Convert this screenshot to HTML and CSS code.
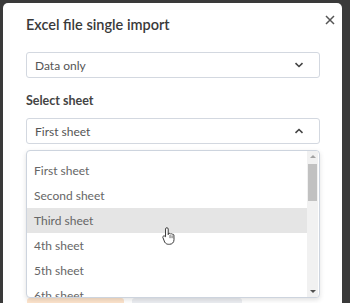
FILE: index.html
```html
<!DOCTYPE html>
<html lang="en">
<head>
  <meta charset="UTF-8" />
  <meta name="viewport" content="width=device-width, initial-scale=1.0"/>
  <title>Excel file single import</title>
  <link rel="stylesheet" href="styles.css">
</head>
<body>
  <div class="modal">
    <!-- Header -->
    <div class="modal-header">
      <h2>Excel file single import</h2>
      <button class="close-btn" aria-label="Close">
        <svg width="10" height="10" viewBox="0 0 10 10"><path d="M1 1L9 9M9 1L1 9" stroke="#555" stroke-width="1.5" fill="none"/></svg>
      </button>
    </div>

    <!-- Import mode -->
    <div class="select">
      <span>Data only</span>
      <svg width="10" height="6" viewBox="0 0 10 6"><path d="M1.5 1.2L5 4.5L8.5 1.2" stroke="#444" stroke-width="1.6" fill="none"/></svg>
    </div>

    <!-- Sheet picker -->
    <div class="label">Select sheet</div>
    <div class="dropdown">
      <div class="select open">
        <span>First sheet</span>
        <svg width="10" height="6" viewBox="0 0 10 6"><path d="M1.5 4.8L5 1.5L8.5 4.8" stroke="#444" stroke-width="1.6" fill="none"/></svg>
      </div>
      <div class="menu">
        <ul class="options">
          <li>First sheet</li>
          <li>Second sheet</li>
          <li class="hover">Third sheet
            <svg class="cursor" width="15" height="19" viewBox="0 0 14 17"><path d="M4.5 1.2c.8 0 1.3.6 1.3 1.3v5.2l.3-1c.6-.4 1.4-.2 1.7.4.5-.4 1.3-.3 1.7.3.5-.3 1.3-.1 1.6.6l.1 4.4c0 2.6-1.8 4.3-4.2 4.3h-1c-1.6 0-2.6-.8-3.5-2L1 10.8c-.5-.7-.3-1.5.4-1.8.6-.3 1.3 0 1.8.6l.1.1V2.5c0-.7.5-1.3 1.2-1.3z" fill="#fff" stroke="#333" stroke-width=".9"/><path d="M7.5 8v3M9.4 8.4v2.6" stroke="#333" stroke-width=".7"/></svg>
          </li>
          <li>4th sheet</li>
          <li>5th sheet</li>
          <li>6th sheet</li>
        </ul>
        <div class="scrollbar">
          <span class="arrow up"></span>
          <div class="track"><div class="thumb"></div></div>
          <span class="arrow down"></span>
        </div>
      </div>
    </div>

    <!-- Footer buttons, mostly hidden behind the open menu -->
    <div class="actions">
      <button class="btn primary" aria-label="Import"></button>
      <button class="btn secondary" aria-label="Cancel"></button>
    </div>
  </div>
</body>
</html>
```

FILE: styles.css
```css
/* Page backdrop */
body {
  margin: 0;
  background: #3a3a3a;
  font-family: Lato, "Open Sans", sans-serif;
  overflow: hidden;
}

/* Modal */
.modal {
  width: 339px;
  height: 300px;
  margin: 3px 0 0 3px;
  padding: 12px 22px 0 23px;
  box-sizing: border-box;
  background: #fff;
  border-radius: 5px 5px 0 0;
  overflow: hidden;
}

.modal-header {
  display: flex;
  justify-content: space-between;
  align-items: flex-start;
}
.modal-header h2 {
  margin: 0;
  font-size: 14.5px;
  line-height: 20px;
  font-weight: 600;
  color: #3a3a3a;
}
.close-btn {
  border: none;
  background: none;
  padding: 0;
  margin: -1px -16px 0 0;
  width: 12px;
  height: 12px;
  display: flex;
  align-items: center;
  justify-content: center;
}

/* Select boxes */
.select {
  display: flex;
  align-items: center;
  justify-content: space-between;
  height: 26px;
  margin-top: 17px;
  padding: 0 15px 0 8px;
  box-sizing: border-box;
  border: 1px solid #d3d8e0;
  border-radius: 3px;
  font-size: 12px;
  color: #555;
}
.select.open {
  margin-top: 0;
}

.label {
  margin: 14px 0 8px;
  font-size: 12.5px;
  line-height: 18px;
  font-weight: 700;
  color: #444;
}

/* Dropdown menu */
.dropdown {
  position: relative;
}
.menu {
  position: absolute;
  left: 0;
  right: 0;
  top: 32px;
  height: 146px;
  display: flex;
  background: #fff;
  border: 1px solid #cdd4de;
  border-radius: 4px;
  box-shadow: 0 2px 5px rgba(0, 0, 0, 0.12);
  overflow: hidden;
  z-index: 2;
}
.options {
  flex: 1;
  list-style: none;
  margin: 0;
  padding: 7px 0 0;
}
.options li {
  position: relative;
  height: 25px;
  line-height: 25px;
  padding-left: 7px;
  font-size: 12px;
  color: #666;
}
.options li.hover {
  background: #e5e5e5;
}
.cursor {
  position: absolute;
  left: 135px;
  top: 18px;
  z-index: 1;
}

/* Scrollbar */
.scrollbar {
  width: 11px;
  margin-right: 1px;
  display: flex;
  flex-direction: column;
  align-items: center;
  background: #f1f1f1;
}
.track {
  flex: 1;
  width: 100%;
  padding: 0 1px;
  box-sizing: border-box;
}
.thumb {
  height: 37px;
  margin-top: 2px;
  background: #c1c1c1;
}
.arrow {
  width: 0;
  height: 0;
  margin: 4px 0;
  border-left: 3px solid transparent;
  border-right: 3px solid transparent;
}
.arrow.up {
  border-bottom: 3px solid #a3a3a3;
}
.arrow.down {
  border-top: 3px solid #505050;
}

/* Footer */
.actions {
  display: flex;
  gap: 8px;
  margin-top: 154px;
  padding-left: 1px;
}
.btn {
  height: 30px;
  border: none;
  border-radius: 3px;
  font-family: inherit;
  font-size: 12px;
}
.btn.primary {
  width: 97px;
  background: #fde4cc;
}
.btn.secondary {
  width: 110px;
  background: #eceef2;
}
```
